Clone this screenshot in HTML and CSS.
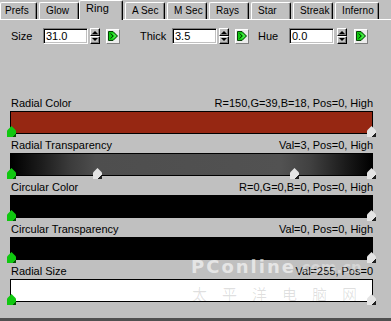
FILE: index.html
```html
<!DOCTYPE html>
<html lang="en">
<head>
    <meta charset="UTF-8">
    <title>Ring</title>
    <link rel="stylesheet" href="styles.css">
</head>
<body>
<div class="panel">
    <div class="tabs">
        <div class="tab tab-first">Prefs</div>
        <div class="tab">Glow</div>
        <div class="tab active">Ring</div>
        <div class="tab">A Sec</div>
        <div class="tab">M Sec</div>
        <div class="tab">Rays</div>
        <div class="tab">Star</div>
        <div class="tab">Streak</div>
        <div class="tab tab-last">Inferno</div>
    </div>

    <div class="controls">
        <span class="lbl">Size</span>
        <input class="num" type="text" value="31.0" readonly>
        <div class="spin"><span class="up"></span><span class="down"></span></div>
        <span class="go"><svg width="10" height="10" viewBox="0 0 10 10"><polygon points="0.5,0.5 5,0.5 9.5,5 5,9.5 0.5,9.5" fill="#10c810" stroke="#064006"/><polyline points="2.5,2.5 5,5 2.5,7.5" fill="none" stroke="#064006"/><polyline points="5,2.5 7.5,5 5,7.5" fill="none" stroke="#7dff7d"/></svg></span>

        <span class="lbl lbl-thick">Thick</span>
        <input class="num" type="text" value="3.5" readonly>
        <div class="spin"><span class="up"></span><span class="down"></span></div>
        <span class="go"><svg width="10" height="10" viewBox="0 0 10 10"><polygon points="0.5,0.5 5,0.5 9.5,5 5,9.5 0.5,9.5" fill="#10c810" stroke="#064006"/><polyline points="2.5,2.5 5,5 2.5,7.5" fill="none" stroke="#064006"/><polyline points="5,2.5 7.5,5 5,7.5" fill="none" stroke="#7dff7d"/></svg></span>

        <span class="lbl lbl-hue">Hue</span>
        <input class="num" type="text" value="0.0" readonly>
        <div class="spin spin-hue"><span class="up"></span><span class="down"></span></div>
        <span class="go go-hue"><svg width="10" height="10" viewBox="0 0 10 10"><polygon points="0.5,0.5 5,0.5 9.5,5 5,9.5 0.5,9.5" fill="#10c810" stroke="#064006"/><polyline points="2.5,2.5 5,5 2.5,7.5" fill="none" stroke="#064006"/><polyline points="5,2.5 7.5,5 5,7.5" fill="none" stroke="#7dff7d"/></svg></span>
    </div>

    <div class="grads">
        <div class="grad-head"><span>Radial Color</span><span>R=150,G=39,B=18, Pos=0, High</span></div>
        <div class="bar bar-red">
            <span class="mark mark-green mark-left"></span>
            <span class="mark mark-white mark-right"></span>
        </div>

        <div class="grad-head"><span>Radial Transparency</span><span>Val=3, Pos=0, High</span></div>
        <div class="bar bar-trans">
            <span class="mark mark-green mark-left"></span>
            <span class="mark mark-white" style="left: 82px"></span>
            <span class="mark mark-white" style="left: 279px"></span>
            <span class="mark mark-white mark-right"></span>
        </div>

        <div class="grad-head"><span>Circular Color</span><span>R=0,G=0,B=0, Pos=0, High</span></div>
        <div class="bar bar-black">
            <span class="mark mark-green mark-left"></span>
            <span class="mark mark-white mark-right"></span>
        </div>

        <div class="grad-head"><span>Circular Transparency</span><span>Val=0, Pos=0, High</span></div>
        <div class="bar bar-black">
            <span class="mark mark-green mark-left"></span>
            <span class="mark mark-white mark-right"></span>
        </div>

        <div class="grad-head"><span>Radial Size</span><span>Val=255, Pos=0</span></div>
        <div class="bar bar-white">
            <span class="mark mark-green mark-left"></span>
            <span class="mark mark-white mark-right"></span>
        </div>
    </div>

    <div class="wm">PConline<span class="wm-dom">.com.cn</span></div>
    <div class="wm-cn">太平洋电脑网</div>
</div>
</body>
</html>
```

FILE: styles.css
```css
body {
    margin: 0;
    background-color: #c0c0c0;
    font-family: "Liberation Sans", Arial, sans-serif;
    font-size: 11px;
    color: #000;
}
.panel {
    position: relative;
    width: 391px;
    height: 321px;
    box-sizing: border-box;
    border-bottom: 3px solid #505050;
    overflow: hidden;
}

/* tab strip */
.tabs {
    display: flex;
    align-items: flex-end;
    height: 20px;
    box-sizing: border-box;
    border-bottom: 1px solid #fff;
}
.tab {
    width: 40px;
    height: 17px;
    margin-right: 2px;
    padding-left: 6px;
    box-sizing: border-box;
    border: 1px solid #fff;
    border-right-color: #000;
    border-bottom: none;
    border-radius: 2px 2px 0 0;
    box-shadow: inset -1px 0 #808080;
    font-size: 10px;
    letter-spacing: 0.1px;
    line-height: 15px;
    white-space: nowrap;
    overflow: hidden;
}
.tab-first {
    width: 37px;
    padding-left: 4px;
}
.tab-last {
    width: 44px;
}
.tab.active {
    position: relative;
    width: 44px;
    height: 20px;
    margin-left: -2px;
    margin-bottom: -1px;
    margin-right: 2px;
    background-color: #c0c0c0;
    font-size: 11px;
    line-height: 15px;
}

/* number fields row */
.controls {
    display: flex;
    align-items: center;
    margin-top: 8px;
    padding-left: 11px;
    height: 16px;
}
.lbl {
    width: 32px;
}
.lbl-thick {
    margin-left: 20px;
}
.lbl-hue {
    margin-left: 9px;
    width: 31px;
}
.num {
    width: 45px;
    height: 16px;
    box-sizing: border-box;
    margin: 0;
    padding: 0 2px;
    border: 1px solid;
    border-color: #808080 #fff #fff #808080;
    box-shadow: inset 1px 1px #000, inset -1px -1px #c0c0c0;
    background-color: #fff;
    font-family: inherit;
    font-size: 11px;
    line-height: 12px;
    outline: none;
}
.spin {
    display: flex;
    flex-direction: column;
    width: 10px;
    height: 16px;
    margin-left: 2px;
}
.spin-hue {
    margin-left: 3px;
}
.spin span {
    position: relative;
    height: 8px;
    box-sizing: border-box;
    border: 1px solid;
    border-color: #fff #000 #000 #fff;
    box-shadow: inset -1px -1px #808080;
}
.spin span::after {
    content: "";
    position: absolute;
    left: 1px;
    border-left: 3px solid transparent;
    border-right: 3px solid transparent;
}
.spin .up::after {
    top: 2px;
    border-bottom: 3px solid #000;
}
.spin .down::after {
    top: 1px;
    border-top: 3px solid #000;
}
.go {
    display: flex;
    align-items: center;
    justify-content: center;
    width: 14px;
    height: 15px;
    margin-left: 6px;
    box-sizing: border-box;
    background-color: #ececec;
    border: 1px solid;
    border-color: #fff #808080 #808080 #fff;
}
.go-hue {
    margin-left: 7px;
}

/* gradient editors */
.grads {
    margin-top: 53px;
    padding: 0 18px 0 10px;
}
.grad-head {
    display: flex;
    justify-content: space-between;
    height: 14px;
    line-height: 13px;
    padding-left: 1px;
    white-space: nowrap;
}
.bar {
    position: relative;
    height: 23px;
    box-sizing: border-box;
    border: 1px solid #000;
    margin-bottom: 5px;
}
.bar-red {
    background-color: #962712;
}
.bar-trans {
    background: linear-gradient(to right, #000 0, #1c1c1c 30px, #3c3c3c 60px, #4e4e4e 85px, #525252 270px, #404040 300px, #1a1a1a 335px, #000 100%);
}
.bar-black {
    background-color: #000;
}
.bar-white {
    background-color: #fff;
}
.mark {
    position: absolute;
    top: 14px;
    width: 9px;
    height: 11px;
    clip-path: polygon(50% 0, 100% 40%, 100% 100%, 0 100%, 0 40%);
}
.mark-left {
    left: -4px;
}
.mark-right {
    right: -4px;
}
.mark-green {
    background: linear-gradient(135deg, #b0ffb0 0, #b0ffb0 15%, #10c810 16%, #10c810 80%, #065006 81%);
}
.mark-white {
    background: linear-gradient(135deg, #fff 0, #fff 15%, #e4e4e4 16%, #e4e4e4 78%, #202020 79%);
}

/* site watermark */
.wm {
    position: absolute;
    left: 191px;
    top: 256px;
    font-family: "DejaVu Sans", sans-serif;
    font-weight: bold;
    font-size: 18px;
    letter-spacing: 2px;
    color: rgba(255, 255, 255, 0.6);
    pointer-events: none;
    white-space: nowrap;
}
.wm-dom {
    font-size: 15px;
    letter-spacing: 0;
    color: rgba(255, 255, 255, 0.35);
}
.wm-cn {
    position: absolute;
    left: 192px;
    top: 283px;
    font-family: "Noto Sans CJK SC", sans-serif;
    font-size: 15px;
    letter-spacing: 15px;
    color: rgba(0, 0, 0, 0.12);
    pointer-events: none;
    white-space: nowrap;
}
```
